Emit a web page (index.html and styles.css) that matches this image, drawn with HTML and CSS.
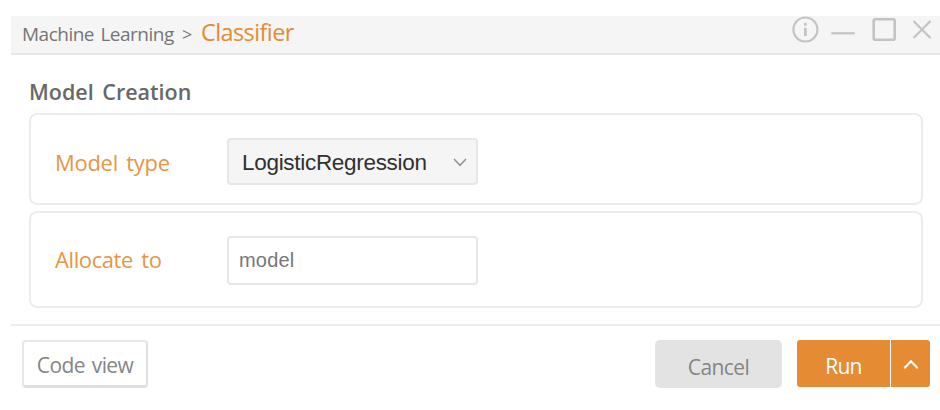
FILE: index.html
```html
<!DOCTYPE html>
<html lang="en">
<head>
<meta charset="utf-8">
<title>Classifier</title>
<link rel="stylesheet" href="styles.css">
</head>
<body>
<div class="window">
  <header class="titlebar">
    <nav class="crumbs"><span class="parent">Machine Learning</span><span class="sep">&gt;</span><span class="current">Classifier</span></nav>
    <svg class="controls" width="144" height="28" viewBox="0 0 144 28" fill="none" stroke="#c3c3c3">
      <circle cx="13.4" cy="13.5" r="12" stroke-width="2.2"/>
      <path d="M13.4 11.8v8.2M13.4 6.8v2.9" stroke-width="2.6"/>
      <path d="M39.3 17.3h23.5" stroke-width="2.2"/>
      <rect x="81.7" y="3.2" width="21" height="20.6" rx="1.5" stroke-width="2.6"/>
      <path d="M121.5 5l17 17M138.5 5l-17 17" stroke-width="2.2"/>
    </svg>
  </header>
  <main class="content">
    <h1 class="heading"><span>Model Creation</span></h1>
    <section class="card card-type">
      <span class="label label-type">Model type</span>
      <div class="field select"><span class="value">LogisticRegression</span>
        <svg width="14" height="9" viewBox="0 0 14 9" fill="none" stroke="#929292" stroke-width="1.5"><path d="M1 1l6 6.3L13 1"/></svg>
      </div>
    </section>
    <section class="card card-alloc">
      <span class="label label-alloc">Allocate to</span>
      <div class="field input"><span class="value">model</span></div>
    </section>
  </main>
  <footer class="footer">
    <button class="btn code"><span>Code view</span></button>
    <button class="btn cancel"><span>Cancel</span></button>
    <button class="btn run"><span>Run</span></button>
    <button class="btn more" aria-label="More">
      <svg width="16" height="11" viewBox="0 0 16 11" fill="none" stroke="#fff" stroke-width="2.1"><path d="M1.3 9.2L8 2.2l6.7 7"/></svg>
    </button>
  </footer>
</div>
</body>
</html>
```

FILE: styles.css
```css
* { box-sizing: border-box; }
body {
  margin: 0;
  background: #fff;
  font-family: "Open Sans", "Noto Sans", sans-serif;
  color: #757575;
}
.window { margin-left: 11px; padding-top: 16px; }
.titlebar {
  display: flex;
  justify-content: space-between;
  height: 39px;
  background: #f5f5f5;
  border-bottom: 2px solid #e7e7e7;
}
.crumbs {
  display: flex;
  align-items: baseline;
  padding-left: 11px;
  line-height: 33px;
  white-space: nowrap;
}
.parent { width: 160px; font-size: 19px; letter-spacing: -0.5px; word-spacing: 2px; }
.sep { width: 19px; font-size: 18px; }
.current { font-size: 23.5px; letter-spacing: -0.6px; color: #e58b33; }
.controls { margin-right: 4px; }
.content { padding: 22px 18px 16px 18px; }
.heading {
  margin: 0;
  height: 36px;
  padding-left: 0;
  font-size: 21.5px;
  font-weight: 600;
  line-height: 30px;
  word-spacing: 3px;
  color: #686868;
}
.card {
  display: flex;
  align-items: center;
  width: 894px;
  border: 2px solid #ececec;
  border-radius: 8px;
  padding-left: 24px;
}
.card-type { height: 92px; padding-top: 5px; }
.card-alloc { height: 97px; margin-top: 6px; padding-top: 2px; }
.label {
  width: 172px;
  font-size: 22px;
  letter-spacing: -0.3px;
  word-spacing: 3px;
  color: #e89543;
  white-space: nowrap;
}
.label-alloc { padding-bottom: 4px; letter-spacing: -0.4px; }
.field {
  display: flex;
  align-items: center;
  justify-content: space-between;
  width: 251px;
  border: 2px solid #e7e7e7;
  border-radius: 4px;
  font-family: "Liberation Sans", Arial, sans-serif;
}
.select { height: 47px; padding: 2px 9px 0 13px; background: #f5f5f5; color: #303030; font-size: 22.5px; letter-spacing: -0.3px; }
.input { height: 49px; padding: 0 10px; color: #777; font-size: 20px; letter-spacing: 0.2px; }
.footer {
  display: flex;
  align-items: flex-start;
  padding: 14px 10px 0 11px;
  border-top: 2px solid #ececec;
}
.btn {
  display: flex;
  align-items: center;
  justify-content: center;
  height: 48px;
  padding: 0;
  border: 0;
  border-radius: 3px;
  font-family: inherit;
  font-size: 21px;
  line-height: 28px;
  color: #858585;
}
.code { width: 126px; border: 2px solid #e8e8e8; border-right-color: #dfdfdf; border-bottom: 3px solid #dfdfdf; border-radius: 4px; background: #fff; letter-spacing: -0.6px; word-spacing: 2px; padding-top: 2px; }
.cancel { width: 127px; margin-left: auto; margin-right: 15px; padding-top: 5px; border-radius: 5px; background: #e3e3e3; letter-spacing: -0.6px; }
.run { width: 93px; height: 47px; margin-right: 1px; padding-top: 4px; border-radius: 3px 0 0 3px; background: #e58b33; color: #fff; letter-spacing: -0.8px; }
.more { width: 39px; height: 47px; padding-top: 2px; border-radius: 0 3px 3px 0; background: #e58b33; }
```
